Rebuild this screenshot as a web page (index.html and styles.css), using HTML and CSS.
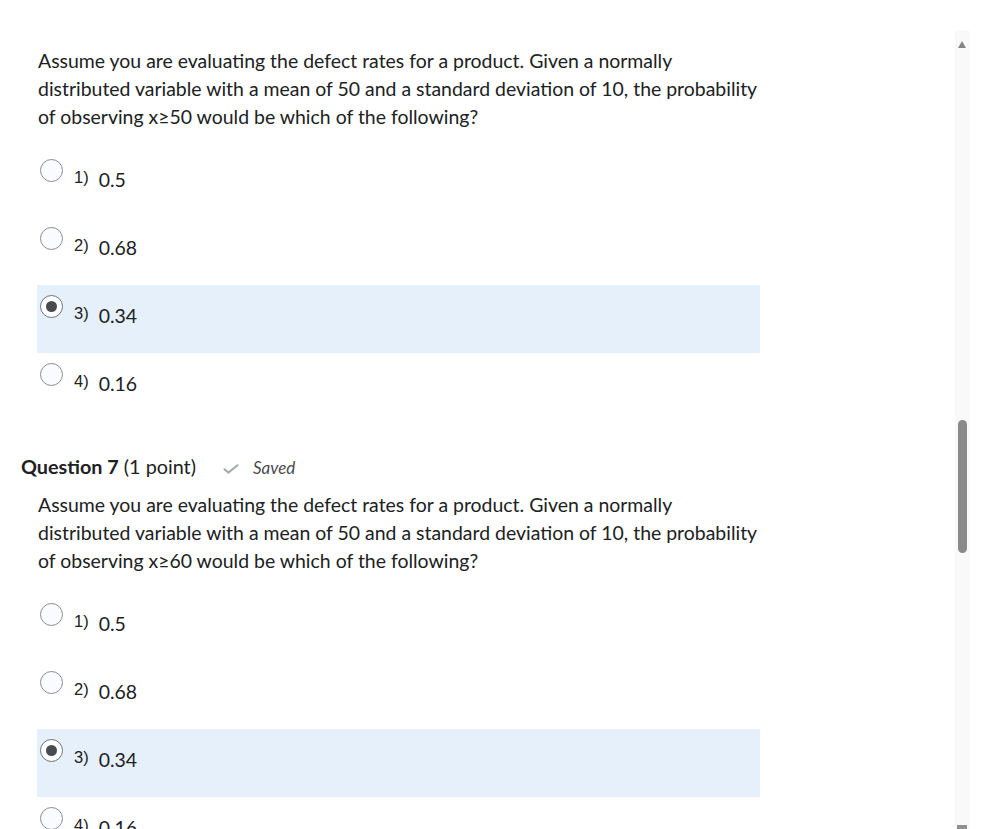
FILE: index.html
```html
<!DOCTYPE html>
<html lang="en">
<head>
<meta charset="utf-8">
<title>Quiz</title>
<link rel="stylesheet" href="styles.css">
</head>
<body>
<main class="page">
  <section class="question first">
    <p class="qtext">Assume you are evaluating the defect rates for a product. Given a normally<br>distributed variable with a mean of 50 and a standard deviation of 10, the probability<br>of observing x≥50 would be which of the following?</p>
    <div class="options">
      <div class="opt"><span class="radio"></span><span class="num">1)</span><span class="ans">0.5</span></div>
      <div class="opt"><span class="radio"></span><span class="num">2)</span><span class="ans">0.68</span></div>
      <div class="opt selected"><span class="radio checked"></span><span class="num">3)</span><span class="ans">0.34</span></div>
      <div class="opt"><span class="radio"></span><span class="num">4)</span><span class="ans">0.16</span></div>
    </div>
  </section>
  <section class="question">
    <h2 class="qhead"><strong>Question 7</strong> (1 point)<span class="saved"><svg class="check" viewBox="0 0 16 10" width="16" height="10"><path d="M1.5 5.2 L5.3 8.6 L14.5 1.2" fill="none" stroke="#a3a6aa" stroke-width="2" stroke-linecap="round" stroke-linejoin="round"/></svg><em>Saved</em></span></h2>
    <p class="qtext">Assume you are evaluating the defect rates for a product. Given a normally<br>distributed variable with a mean of 50 and a standard deviation of 10, the probability<br>of observing x≥60 would be which of the following?</p>
    <div class="options">
      <div class="opt"><span class="radio"></span><span class="num">1)</span><span class="ans">0.5</span></div>
      <div class="opt"><span class="radio"></span><span class="num">2)</span><span class="ans">0.68</span></div>
      <div class="opt selected"><span class="radio checked"></span><span class="num">3)</span><span class="ans">0.34</span></div>
      <div class="opt"><span class="radio"></span><span class="num">4)</span><span class="ans">0.16</span></div>
    </div>
  </section>
</main>
<div class="scrollbar">
  <span class="arrow-up"></span>
  <span class="thumb"></span>
  <span class="arrow-down"></span>
</div>
</body>
</html>
```
FILE: styles.css
```css
html, body {
  margin: 0;
  padding: 0;
  background: #ffffff;
  overflow: hidden;
}
body {
  font-family: Lato, "Noto Sans", sans-serif;
  color: #202122;
  height: 829px;
}
.page {
  padding: 47px 0 0 21px;
  width: 740px;
}
.question {
  margin: 0;
}
.question + .question {
  margin-top: 31px;
}
.qhead {
  margin: 0 0 11px 0;
  height: 28px;
  font-size: 19.8px;
  line-height: 28px;
  font-weight: 400;
  display: flex;
  align-items: baseline;
  white-space: nowrap;
}
.qhead strong {
  font-weight: 700;
  margin-right: 5px;
}
.saved {
  display: inline-flex;
  align-items: baseline;
  margin-left: 27px;
  font-size: 17px;
  color: #494c4e;
}
.saved .check {
  margin-right: 14px;
}
.saved em {
  font-style: italic;
}
.qtext {
  margin: 0 0 0 17px;
  font-size: 19.45px;
  line-height: 28px;
  white-space: nowrap;
}
.options {
  margin: 18px 0 0 16px;
  width: 723px;
}
.opt {
  height: 68px;
  display: flex;
  align-items: flex-start;
  box-sizing: border-box;
}
.opt.selected {
  background: #e6f0fb;
}
.radio {
  box-sizing: border-box;
  width: 23px;
  height: 23px;
  margin: 10px 0 0 3px;
  border: 1px solid #8a8d90;
  border-radius: 50%;
  background: #f9fbff;
  display: flex;
  align-items: center;
  justify-content: center;
  flex: none;
}
.radio.checked {
  border: 1.5px solid #6e7376;
  background: #ffffff;
}
.radio.checked::after {
  content: "";
  width: 11px;
  height: 11px;
  border-radius: 50%;
  background: #494c4e;
}
.num {
  font-family: "Liberation Sans", Arial, sans-serif;
  font-size: 16.5px;
  line-height: 20px;
  margin: 18px 0 0 11px;
  color: #202122;
}
.ans {
  font-size: 19.45px;
  line-height: 28px;
  margin: 17px 0 0 10px;
  color: #202122;
}
.scrollbar {
  position: fixed;
  left: 955px;
  top: 31px;
  width: 15px;
  bottom: 0;
  background: #f9f9f9;
}
.arrow-up {
  position: absolute;
  left: 3px;
  top: 10px;
  width: 0;
  height: 0;
  border-left: 4.5px solid transparent;
  border-right: 4.5px solid transparent;
  border-bottom: 7px solid #858585;
}
.thumb {
  position: absolute;
  left: 3px;
  top: 389px;
  width: 9px;
  height: 133px;
  border-radius: 5px;
  background: #8a8a8a;
}
.arrow-down {
  position: absolute;
  left: 2px;
  top: 794px;
  width: 10px;
  height: 6px;
  background: #8f8f8f;
}
```
